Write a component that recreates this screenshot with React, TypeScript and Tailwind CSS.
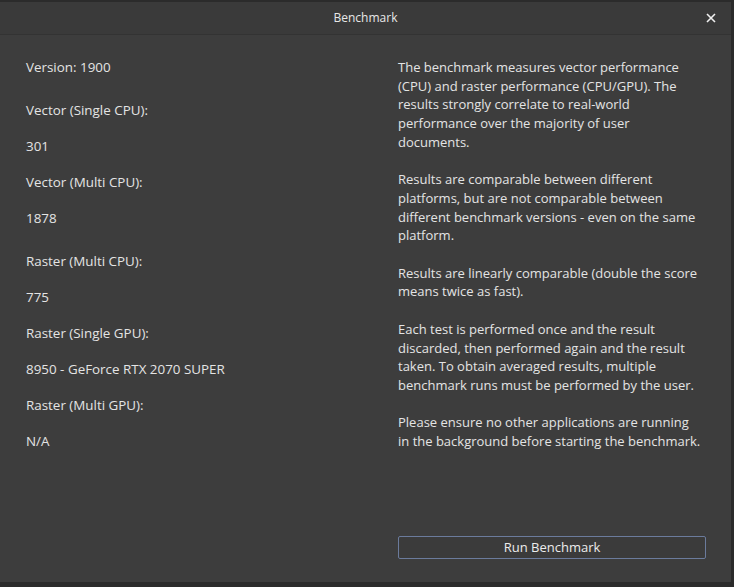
import React from "react"

const results = [
  { label: "Vector (Single CPU):", value: "301" },
  { label: "Vector (Multi CPU):", value: "1878", extra: true },
  { label: "Raster (Multi CPU):", value: "775" },
  { label: "Raster (Single GPU):", value: "8950 - GeForce RTX 2070 SUPER" },
  { label: "Raster (Multi GPU):", value: "N/A" },
]

const notes = [
  "The benchmark measures vector performance (CPU) and raster performance (CPU/GPU). The results strongly correlate to real-world performance over the majority of user documents.",
  "Results are comparable between different platforms, but are not comparable between different benchmark versions - even on the same platform.",
  "Results are linearly comparable (double the score means twice as fast).",
  "Each test is performed once and the result discarded, then performed again and the result taken. To obtain averaged results, multiple benchmark runs must be performed by the user.",
  "Please ensure no other applications are running in the background before starting the benchmark.",
]

export default function App() {
  return (
    <div
      className="w-[734px] h-[587px] bg-[#2b2b2b] flex flex-col overflow-hidden text-[#e4e4e4]"
      style={{ fontFamily: '"Open Sans", "Noto Sans", sans-serif' }}
    >
      <div className="mt-[2px] mr-[3px] flex-1 flex flex-col bg-[#3d3d3d]">
        {/* Title bar */}
        <div className="relative h-[33px] bg-[#3a3a3a] border-b border-[#333333] flex items-center justify-center">
          <span className="text-[12px] text-[#e8e8e8]">Benchmark</span>
          <button type="button" className="absolute right-[12px] top-[8px] w-[16px] h-[16px] flex items-center justify-center">
            <svg width="10" height="10" viewBox="0 0 10 10">
              <path d="M1 1L9 9M9 1L1 9" stroke="#f0f0f0" strokeWidth="1.6" />
            </svg>
          </button>
        </div>

        {/* Body */}
        <div className="flex-1 flex pt-[23px]">
          <div className="w-[398px] pl-[26px] text-[13.4px] leading-[18px]">
            <div className="mb-[25px]">Version: 1900</div>
            {results.map((r) => (
              <div key={r.label}>
                <div className="mb-[18px]">{r.label}</div>
                <div className={r.extra ? "mb-[25px]" : "mb-[18px]"}>{r.value}</div>
              </div>
            ))}
          </div>

          <div className="w-[308px] flex flex-col pb-[23px]">
            <div className="w-[303px] text-[13px] leading-[18.7px]">
              {notes.map((n, i) => (
                <p key={i} className="mb-[18.7px]">{n}</p>
              ))}
            </div>
            <button
              type="button"
              className="mt-auto h-[23px] border border-[#6b7b9c] rounded-[2px] bg-[#3b3b3b] text-[13px] text-[#ececec] flex items-center justify-center"
            >
              Run Benchmark
            </button>
          </div>
        </div>
      </div>
      <div className="h-[5px]" />
    </div>
  )
}
